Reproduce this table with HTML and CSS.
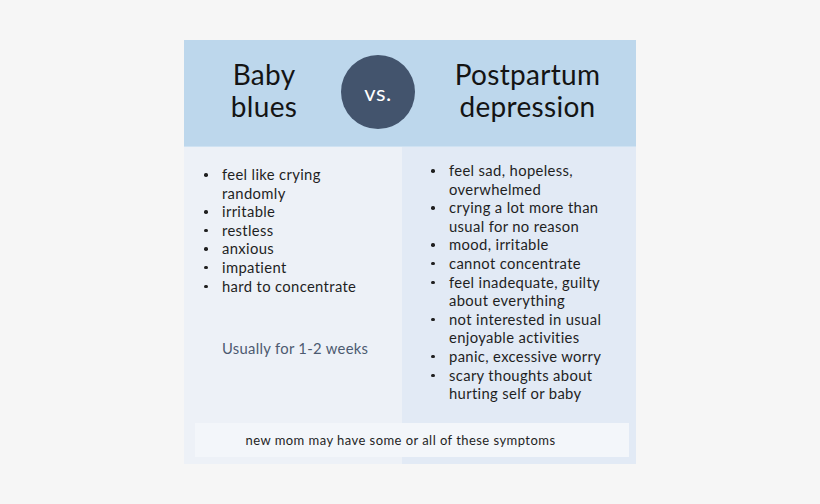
FILE: index.html
```html
<!DOCTYPE html>
<html>
<head>
<meta charset="utf-8">
<link rel="stylesheet" href="styles.css">
</head>
<body>
<div class="card">
  <div class="header">
    <div class="title title-left">Baby<br>blues</div>
    <div class="vs">vs.</div>
    <div class="title title-right">Postpartum<br>depression</div>
  </div>
  <div class="col col-left">
    <ul class="list">
      <li>feel like crying randomly</li>
      <li>irritable</li>
      <li>restless</li>
      <li>anxious</li>
      <li>impatient</li>
      <li>hard to concentrate</li>
    </ul>
    <p class="usually">Usually for 1-2 weeks</p>
  </div>
  <div class="col col-right">
    <ul class="list list-right">
      <li>feel sad, hopeless, overwhelmed</li>
      <li>crying a lot more than usual for no reason</li>
      <li>mood, irritable</li>
      <li>cannot concentrate</li>
      <li>feel inadequate, guilty about everything</li>
      <li>not interested in usual enjoyable activities</li>
      <li>panic, excessive worry</li>
      <li>scary thoughts about hurting self or baby</li>
    </ul>
  </div>
  <div class="footer">new mom may have some or all of these symptoms</div>
</div>
</body>
</html>
```
FILE: styles.css
```css
html, body {
  margin: 0;
  padding: 0;
}
body {
  background: #f6f6f6;
  font-family: Lato, "Open Sans", sans-serif;
  color: #1e1e1e;
  padding-top: 40px;
}
.card {
  width: 452px;
  height: 424px;
  margin: 0 auto;
  display: grid;
  grid-template-columns: 218px 234px;
  grid-template-rows: 107px 1fr 41px;
}
.header {
  grid-column: 1 / 3;
  grid-row: 1;
  background: #bdd7ec;
  border-bottom: 1px solid #cfe2f2;
  display: flex;
  align-items: center;
}
.title {
  font-size: 28px;
  line-height: 32px;
  text-align: center;
  color: #141414;
  letter-spacing: 0.3px;
}
.title-left {
  width: 160px;
  padding-bottom: 6px;
}
.title-right {
  flex: 1;
  padding-left: 4px;
  padding-bottom: 6px;
}
.vs {
  width: 74px;
  height: 74px;
  border-radius: 50%;
  background: #43546d;
  color: #ffffff;
  font-size: 22px;
  letter-spacing: 0.5px;
  display: flex;
  align-items: center;
  justify-content: center;
  margin-bottom: 2px;
  margin-left: -3px;
}
.col {
  grid-row: 2 / 4;
}
.col-left {
  grid-column: 1;
  background: #edf1f7;
  padding: 18px 0 0 20px;
}
.col-right {
  grid-column: 2;
  background: #e2eaf5;
  padding: 14px 0 0 29px;
}
.list {
  list-style: none;
  margin: 0;
  padding: 0;
  font-size: 14.8px;
  line-height: 18.6px;
  letter-spacing: 0.35px;
  color: #1f1f1f;
}
.list li {
  position: relative;
  padding-left: 18px;
  width: 150px;
}
.list-right li {
  width: 170px;
}
.list li::before {
  content: "";
  position: absolute;
  left: 0;
  top: 8px;
  width: 3.5px;
  height: 3.5px;
  border-radius: 50%;
  background: #1f1f1f;
}
.usually {
  margin: 44px 0 0 18px;
  font-size: 14.8px;
  line-height: 18px;
  letter-spacing: 0.3px;
  color: #4c5a70;
}
.footer {
  grid-column: 1 / 3;
  grid-row: 3;
  margin: 0 7px 7px 11px;
  background: #f3f6fa;
  font-size: 13px;
  letter-spacing: 0.45px;
  color: #1f1f1f;
  display: flex;
  align-items: center;
  justify-content: center;
  padding-right: 23px;
}
```
